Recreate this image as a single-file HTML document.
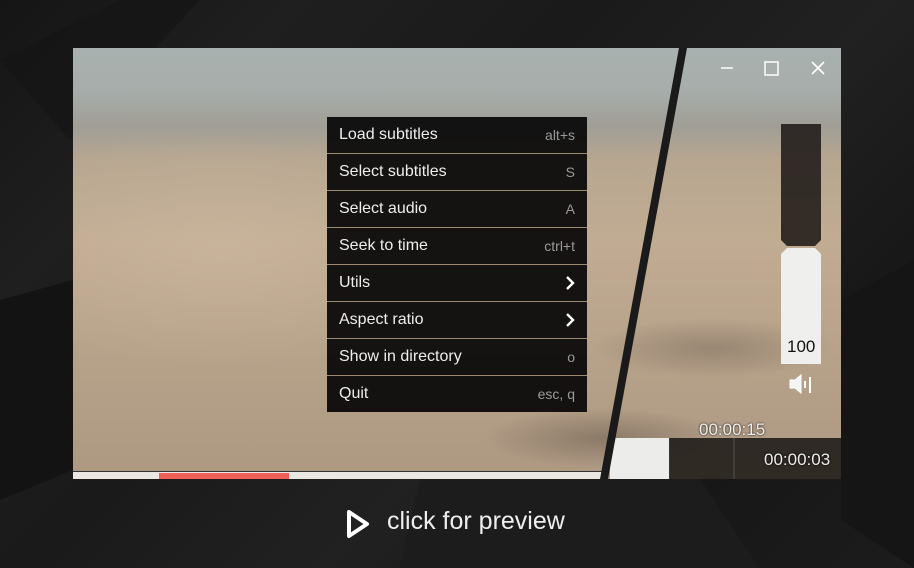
<!DOCTYPE html>
<html><head><meta charset="utf-8"><style>
*{margin:0;padding:0;box-sizing:border-box}
body{width:914px;height:568px;overflow:hidden;background:#1b1b1b;font-family:"Liberation Sans",sans-serif;position:relative}
.bg{position:absolute;inset:0;background:
linear-gradient(135deg,#151515 0%,#1f1f1f 20%,#1a1a1a 40%,#212121 60%,#171717 80%,#1c1c1c 100%)}
.video{position:absolute;left:73px;top:48px;width:768px;height:431px;overflow:hidden;
background:
radial-gradient(ellipse 120px 30px at 530px 390px,rgba(70,60,50,.35),transparent),
radial-gradient(ellipse 120px 30px at 640px 300px,rgba(80,70,60,.3),transparent),
radial-gradient(ellipse 250px 120px at 150px 200px,rgba(215,195,170,.35),transparent),
linear-gradient(180deg,#a9b1b0 0%,#a7adaa 10%,#a09e96 18%,#b7a690 26%,#c1ac93 45%,#b7a28a 70%,#ad9882 100%)}
.diag{position:absolute;left:0;top:0}
.menu{position:absolute;left:327px;top:117px;width:260px;background:rgba(8,8,8,.93)}
.item{height:37px;border-bottom:1px solid #9b8a6e;display:flex;align-items:center;justify-content:space-between;padding:0 12px;color:#eee;font-size:16px}
.item:last-child{border-bottom:none;height:36px}
.item span{color:#9a9a9a;font-size:14px}
.arr{width:10px;height:14px}
.vol{position:absolute;left:781px;top:124px;width:40px;height:240px}
.t{position:absolute;color:#eee;font-size:17px;text-shadow:0 0 2px #000}
</style></head><body>
<div class="bg"></div>
<svg style="position:absolute;left:0;top:0" width="914" height="568">
<polygon points="0,60 120,0 200,0 70,140" fill="#141414" opacity=".6"/>
<polygon points="0,300 73,280 73,470 0,500" fill="#131313"/>
<polygon points="841,300 914,260 914,568 841,520" fill="#151515"/>
<polygon points="420,479 700,479 760,568 400,568" fill="#1c1c1c"/>
</svg>
<div class="video">
<svg class="diag" width="768" height="431">
<rect x="537" y="390" width="60" height="41" fill="#ececeb"/>
<rect x="596" y="390" width="172" height="41" fill="rgba(25,22,20,.85)"/>
<line x1="661" y1="390" x2="661" y2="431" stroke="#555" stroke-width="1"/>
<rect x="0" y="424" width="532" height="7" fill="#ebe8e3"/>
<rect x="86" y="425" width="130" height="6" fill="#f0605a"/>
<rect x="0" y="423" width="532" height="1" fill="#333"/>
<polygon points="606,0 614,0 535,431 527,431" fill="#1a1a1a"/>
<line x1="648" y1="20" x2="660" y2="20" stroke="#fff" stroke-width="1.5"/>
<rect x="692" y="14" width="13" height="13" fill="none" stroke="#fff" stroke-width="1.5"/>
<path d="M739 14 L751 26 M751 14 L739 26" stroke="#fff" stroke-width="1.6"/>
</svg>
</div>
<svg class="vol" width="40" height="240">
<path d="M0 0 H40 V116 L34 122 H6 L0 116 Z" fill="rgba(35,30,28,.9)"/>
<path d="M6 124 H34 L40 130 V240 H0 V130 Z" fill="#efefee"/>
</svg>
<div class="t" style="left:787px;top:337px;color:#111;text-shadow:none">100</div>
<svg style="position:absolute;left:788px;top:373px" width="26" height="22">
<path d="M2 7 H7 L13 2 V20 L7 15 H2 Z" fill="#f4f4f4" stroke="#fff" stroke-width="1"/>
<line x1="17" y1="8" x2="17" y2="15" stroke="#fff" stroke-width="2"/>
<line x1="22" y1="4" x2="22" y2="20" stroke="#fff" stroke-width="2"/>
</svg>
<div class="t" style="left:699px;top:420px">00:00:15</div>
<div class="t" style="left:764px;top:450px">00:00:03</div>
<div class="menu">
<div class="item">Load subtitles<span>alt+s</span></div>
<div class="item">Select subtitles<span>S</span></div>
<div class="item">Select audio<span>A</span></div>
<div class="item">Seek to time<span>ctrl+t</span></div>
<div class="item">Utils<svg class="arr"><path d="M2 1 L8 7 L2 13" fill="none" stroke="#fff" stroke-width="2.4"/></svg></div>
<div class="item">Aspect ratio<svg class="arr"><path d="M2 1 L8 7 L2 13" fill="none" stroke="#fff" stroke-width="2.4"/></svg></div>
<div class="item">Show in directory<span>o</span></div>
<div class="item">Quit<span>esc, q</span></div>
</div>
<svg style="position:absolute;left:345px;top:508px" width="28" height="32">
<path d="M4 4 L22 16 L4 28 Z" fill="none" stroke="#fff" stroke-width="4" stroke-linejoin="round"/>
</svg>
<div style="position:absolute;left:387px;top:507px;color:#eee;font-size:25px;font-family:'Liberation Sans',sans-serif">click for preview</div>
</body></html>
